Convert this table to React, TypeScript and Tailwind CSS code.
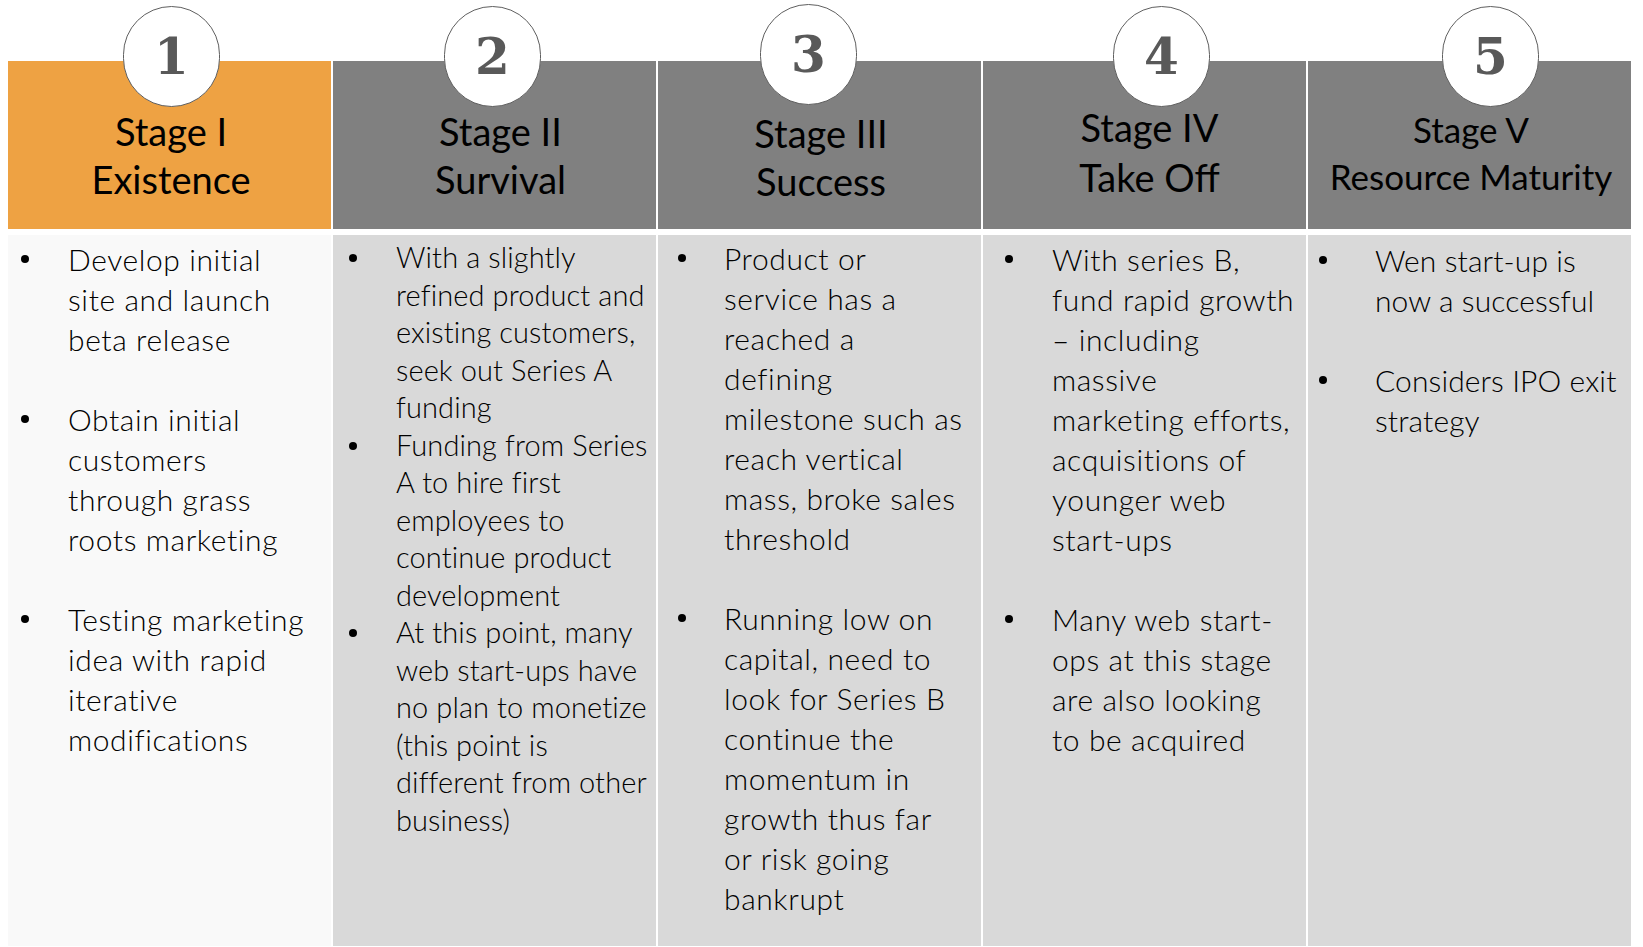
import React from 'react';

type Stage = {
  num: string;
  title: string[];
  headBg: string;
  bodyBg: string;
  circle: string;
  titleBox: string;
  bodyBox: string;
  bulletW: string;
  items: string[][];
  spaced: boolean;
};

const stages: Stage[] = [
  {
    num: '1',
    title: ['Stage I', 'Existence'],
    headBg: 'bg-[#eea243]',
    bodyBg: 'bg-[#f9f9f9]',
    circle: 'left-[115px] top-[6px]',
    titleBox: 'pt-[46px] pl-[3px] text-[38px] leading-[48px]',
    bodyBox: 'pt-[4px] pl-[13px] leading-[40px] text-[30px] tracking-[0.6px]',
    bulletW: 'w-[47px]',
    spaced: true,
    items: [
      ['Develop initial', 'site and launch', 'beta release'],
      ['Obtain initial', 'customers', 'through grass', 'roots marketing'],
      ['Testing marketing', 'idea with rapid', 'iterative', 'modifications'],
    ],
  },
  {
    num: '2',
    title: ['Stage II', 'Survival'],
    headBg: 'bg-[#808080]',
    bodyBg: 'bg-[#d9d9d9]',
    circle: 'left-[111px] top-[6px]',
    titleBox: 'pt-[46px] pl-[12px] text-[38px] leading-[48px]',
    bodyBox: 'pt-[3px] pl-[16px] leading-[37.5px] text-[29px] tracking-[0.1px]',
    bulletW: 'w-[47px]',
    spaced: false,
    items: [
      ['With a slightly', 'refined product and', 'existing customers,', 'seek out Series A', 'funding'],
      ['Funding from Series', 'A to hire first', 'employees to', 'continue product', 'development'],
      ['At this point, many', 'web start-ups have', 'no plan to monetize', '(this point is', 'different from other', 'business)'],
    ],
  },
  {
    num: '3',
    title: ['Stage III', 'Success'],
    headBg: 'bg-[#808080]',
    bodyBg: 'bg-[#d9d9d9]',
    circle: 'left-[102px] top-[4px]',
    titleBox: 'pt-[48px] pl-[3px] text-[38px] leading-[48px]',
    bodyBox: 'pt-[3px] pl-[20px] leading-[40px] text-[30px] tracking-[0.6px]',
    bulletW: 'w-[46px]',
    spaced: true,
    items: [
      ['Product or', 'service has a', 'reached a', 'defining', 'milestone such as', 'reach vertical', 'mass, broke sales', 'threshold'],
      ['Running low on', 'capital, need to', 'look for Series B', 'continue the', 'momentum in', 'growth thus far', 'or risk going', 'bankrupt'],
    ],
  },
  {
    num: '4',
    title: ['Stage IV', 'Take Off'],
    headBg: 'bg-[#808080]',
    bodyBg: 'bg-[#d9d9d9]',
    circle: 'left-[130px] top-[6px]',
    titleBox: 'pt-[41px] pl-[10px] text-[38px] leading-[50px]',
    bodyBox: 'pt-[4px] pl-[22px] leading-[40px] text-[30px] tracking-[0.6px]',
    bulletW: 'w-[47px]',
    spaced: true,
    items: [
      ['With series B,', 'fund rapid growth', '\u2013 including', 'massive', 'marketing efforts,', 'acquisitions of', 'younger web', 'start-ups'],
      ['Many web start-', 'ops at this stage', 'are also looking', 'to be acquired'],
    ],
  },
  {
    num: '5',
    title: ['Stage V', 'Resource Maturity'],
    headBg: 'bg-[#808080]',
    bodyBg: 'bg-[#d9d9d9]',
    circle: 'left-[134px] top-[6px]',
    titleBox: 'pt-[45px] pl-[3px] text-[35px] leading-[47px]',
    bodyBox: 'pt-[5px] pl-[11px] leading-[40px] text-[30px] tracking-[0.1px]',
    bulletW: 'w-[56px]',
    spaced: true,
    items: [
      ['Wen start-up is', 'now a successful'],
      ['Considers IPO exit', 'strategy'],
    ],
  },
];

function Column({ s }: { s: Stage }) {
  return (
    <div className="relative w-[323px] flex flex-col pt-[61px]">
      <div className={`${s.headBg} h-[168px] flex flex-col items-center text-black ${s.titleBox}`}>
        {s.title.map(t => (
          <div key={t} className="whitespace-nowrap">{t}</div>
        ))}
      </div>
      <div className={`${s.bodyBg} mt-[6px] h-[711px] flex flex-col font-light text-black ${s.bodyBox} ${s.spaced ? 'gap-[40px]' : 'gap-0'}`}>
        {s.items.map((lines, i) => (
          <div key={i} className="flex">
            <div className={`${s.bulletW} shrink-0 h-[40px] flex items-center`}>
              <span className="w-[8px] h-[8px] rounded-full bg-black" />
            </div>
            <div className="flex flex-col">
              {lines.map(l => (
                <div key={l} className="whitespace-nowrap">{l}</div>
              ))}
            </div>
          </div>
        ))}
      </div>
      <div className={`absolute ${s.circle} w-[97px] h-[101px] rounded-full bg-white border-[1.5px] border-[#5f5f5f] flex items-center justify-center`}>
        <span className="text-[50px] font-bold text-[#595959] leading-none" style={{ fontFamily: '"DejaVu Serif", serif' }}>
          {s.num}
        </span>
      </div>
    </div>
  );
}

export default function App() {
  return (
    <div className="w-[1643px] h-[947px] bg-white overflow-hidden" style={{ fontFamily: 'Lato, "Open Sans", sans-serif' }}>
      <div className="flex gap-[2px] pl-[8px]">
        {stages.map(s => (
          <Column key={s.num} s={s} />
        ))}
      </div>
    </div>
  );
}
